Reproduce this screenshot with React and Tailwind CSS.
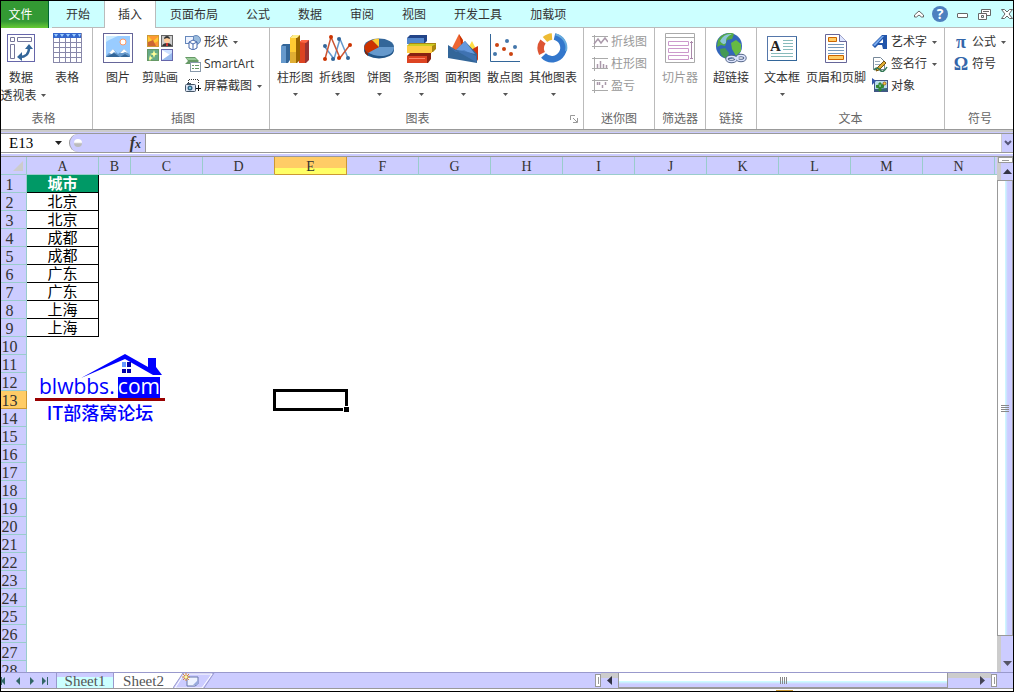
import { useState } from "react"

const columns = ["A", "B", "C", "D", "E", "F", "G", "H", "I", "J", "K", "L", "M", "N"]
const cities = ["城市", "北京", "北京", "成都", "成都", "广东", "广东", "上海", "上海"]
const rows = Array.from({ length: 28 }, (_, i) => i + 1)

const Caret = ({ className = "" }) => (
  <svg viewBox="0 0 5 3" className={`w-[5px] h-[3px] shrink-0 ${className}`}>
    <path d="M0 0h5L2.500 3z" fill="#555" />
  </svg>
)

const Big = ({ children }) => (
  <svg viewBox="0 0 32 32" className="w-8 h-8 shrink-0">
    {children}
  </svg>
)

const Small = ({ children }) => (
  <svg viewBox="0 0 16 16" className="w-4 h-4 shrink-0">
    {children}
  </svg>
)

const PivotIcon = () => (
  <Big>
    <rect x="2.500" y="2.500" width="27" height="27" fill="#fff" stroke="#6666aa" />
    <path d="M5.500 5.500h4v4h-4zM12.500 5.500h14v4h-14zM5.500 12.500h4v14h-4z" fill="#fff" stroke="#777799" />
    <path d="M15 25c5 0 9-3 9-9" fill="none" stroke="#336699" strokeWidth="2.500" />
    <path d="M20 17l4-5 4 5zM17 20v9l-5-4z" fill="#336699" />
  </Big>
)

const TableIcon = () => (
  <Big>
    <rect x="2" y="1" width="29" height="30" fill="#fff" />
    <rect x="2" y="1" width="29" height="5" fill="#3366cc" />
    <path d="M3 2h4l-2 3zM9 2h4l-2 3zM15 2h4l-2 3zM21 2h4l-2 3zM27 2h3l-1.500 3z" fill="#99ccff" />
    <path d="M2.500 6v25M8.500 6v25M14.500 6v25M19.500 6v25M25.500 6v25M30.500 1v30M2 10.500h28M2 15.500h28M2 20.500h28M2 25.500h28M2 30.500h29" stroke="#8888aa" />
  </Big>
)

const PictureIcon = () => (
  <Big>
    <rect x="1.500" y="1.500" width="29" height="29" fill="#fff" stroke="#666699" />
    <rect x="4" y="4" width="24" height="21" fill="#99ccff" />
    <path d="M4 4h12c-4 2-8 3-12 6z" fill="#ccecff" />
    <circle cx="21" cy="10" r="3" fill="#fff" stroke="#ff9966" />
    <path d="M4 24l7-7 5 5 6-5 6 6v2H4z" fill="#6699cc" />
    <path d="M7 21l4-4 3 4-2-1-2 2zM18 21l4-4 4 4-3-1-2 1z" fill="#fff" />
    <path d="M4 25l8-4 6 4 5-3 5 3z" fill="#336699" />
  </Big>
)

const ClipArtIcon = () => (
  <Big>
    <rect x="3.500" y="3.500" width="11" height="11" fill="#ff9933" stroke="#cc9933" />
    <path d="M4 4l5 5 5-4v4l-8 5H4z" fill="#ffcc33" />
    <path d="M4 10l5-2 3 6H4z" fill="#cc6633" />
    <rect x="17.500" y="3.500" width="11" height="11" fill="#ccc" stroke="#666666" />
    <circle cx="23" cy="8" r="3" fill="#ffcc99" />
    <path d="M20 7c0-4 6-4 6 0l-3-1zM18 14c1-4 9-4 10 0z" fill="#333" />
    <path d="M22 11h2v3h-2z" fill="#cc3333" />
    <rect x="3.500" y="17.500" width="11" height="11" fill="#66aa88" stroke="#669966" />
    <path d="M10 18l1 3 3 1-3 1-1 3-1-3-3-1 3-1zM6 23l1 2 2 1-2 1-1 2-1-2" fill="#ffff99" />
    <rect x="17.500" y="17.500" width="11" height="11" fill="#cce0ff" stroke="#6666aa" />
    <path d="M18 18l8 5-8 5z" fill="#fff" />
    <path d="M18 28l10-7v7z" fill="#99bbee" />
  </Big>
)

const ColumnIcon = () => (
  <Big>
    <path d="M2 14l2-2h7v16l-2 3H2z" fill="#336699" />
    <path d="M2 14h5v17H2z" fill="#6699cc" />
    <path d="M20 10l3-2h7v20l-3 3h-7z" fill="#993333" />
    <path d="M20 10h6v21h-6z" fill="#dd4422" />
    <path d="M20 10l3-2h7l-3 3z" fill="#ff6644" />
    <path d="M11 6l3-3h7v25l-3 3h-7z" fill="#996600" />
    <path d="M11 6h6v25h-6z" fill="#ffcc33" />
    <path d="M11 6l3-3h7l-3 3z" fill="#ffee88" />
    <path d="M11 20h6v11h-6z" fill="#cc9933" opacity=".6" />
  </Big>
)

const LineIcon = () => (
  <Big>
    <path d="M4 15L13 27L19 7L27 26" fill="none" stroke="#6699cc" strokeWidth="1.500" />
    <path d="M4 27L10 5L19 26L28 14" fill="none" stroke="#cc5533" strokeWidth="1.500" />
    <g fill="#336699"><circle cx="4" cy="14" r="2" /><circle cx="12" cy="27" r="2" /><circle cx="18" cy="7" r="2" /><circle cx="27" cy="26" r="2" /></g>
    <g fill="#cc3300"><circle cx="4" cy="27" r="2" /><circle cx="10" cy="5" r="2" /><circle cx="18" cy="26" r="2" /><circle cx="29" cy="13" r="2" /></g>
  </Big>
)

const PieIcon = () => (
  <Big>
    <ellipse cx="16" cy="18" rx="15" ry="8.500" fill="#225588" />
    <ellipse cx="16" cy="15" rx="15" ry="8.500" fill="#336699" />
    <path d="M16 15L31 15C31 26 12 26 5 20z" fill="#6699cc" />
    <path d="M16 15L5 21C0 18-1 12 9 8z" fill="#cc3300" />
    <path d="M2 18l3 4v2l-3-3z" fill="#882200" />
    <path d="M16 15L9 8q3-1.500 7-1.500z" fill="#ffcc33" />
  </Big>
)

const BarIcon = () => (
  <Big>
    <path d="M2 6l3-3h17v6l-3 3H2z" fill="#224488" />
    <path d="M2 6h17v6H2z" fill="#5588cc" />
    <path d="M2 14l3-3h26v6l-3 3H2z" fill="#aa8811" />
    <path d="M2 14h25v7H2z" fill="#ffcc44" />
    <path d="M2 14l3-2h26l-4 2z" fill="#cccc22" />
    <path d="M2 24l3-3h21v6l-3 4H2z" fill="#882211" />
    <path d="M2 24h20v7H2z" fill="#dd4422" />
    <path d="M4 26h16v1H4z" fill="#ff8866" />
  </Big>
)

const AreaIcon = () => (
  <Big>
    <path d="M4 18L12 2l9 17z" fill="#ee6633" />
    <path d="M12 2l4 6-1 8z" fill="#cc3300" />
    <path d="M20 18l5-9 4 8z" fill="#ffdd44" />
    <path d="M24 18l5-3 2-1v15z" fill="#cc3311" />
    <path d="M1 13l8 5 9-9 12 13v9L1 26z" fill="#336699" />
    <path d="M9 18l9-9 10 13-12-3z" fill="#6699dd" />
    <path d="M1 14l8 6 8-2 12 6v6z" fill="#4477bb" opacity=".7" />
  </Big>
)

const ScatterIcon = () => (
  <Big>
    <path d="M1.500 2v27.500H31" fill="none" stroke="#336699" />
    <g fill="#cc4411"><circle cx="8" cy="13" r="2" /><circle cx="15" cy="17" r="2" /><circle cx="22" cy="22" r="2" /></g>
    <g fill="#4477aa"><circle cx="6" cy="22" r="2" /><circle cx="18" cy="9" r="2" /><circle cx="26" cy="15" r="2" /></g>
  </Big>
)

// three ring segments with gaps at 12, 8 and 11 o'clock
const DonutIcon = () => (
  <Big>
    <path d="M17.500 4.500A11.500 11.500 0 1 1 6.500 23.500" fill="none" stroke="#3377cc" strokeWidth="6.500" />
    <path d="M18.500 2.500A13.500 13.500 0 0 1 29 19" fill="none" stroke="#66aadd" strokeWidth="2" />
    <path d="M5 21.500A11.500 11.500 0 0 1 6 9.500" fill="none" stroke="#dd5533" strokeWidth="6.500" />
    <path d="M8 7.500A11.500 11.500 0 0 1 15 4.500" fill="none" stroke="#eebb33" strokeWidth="6.500" />
  </Big>
)

const SlicerIcon = () => (
  <Big>
    <path d="M1.500 1.500h29v29h-29zM1 5.500h30" fill="none" stroke="#aaa" />
    <path d="M4.500 9.500h20v4h-20zM4.500 16.500h20v4h-20zM4.500 23.500h20v4h-20z" fill="#fff" stroke="#cc99cc" />
    <path d="M27.500 9v18M26 10.500h3M26 26.500h3" stroke="#aa88aa" />
  </Big>
)

const LinkIcon = () => (
  <Big>
    <circle cx="14" cy="14" r="13" fill="#3366bb" />
    <path d="M3 8C7 1 16 0 19 2l-2 5-5 1-2 6-4-1-4 2z" fill="#55aa44" />
    <path d="M16 11l5-3 5 4v7l-5 5-4-7z" fill="#66bb44" />
    <path d="M5 17l5-1 4 5-2 6C7 25 5 22 5 17z" fill="#449955" />
    <path d="M5 9q4-8 12-7-7 3-6 9-3 3-6-2z" fill="#99ccff" opacity=".8" />
    <g fill="none" strokeWidth="3.500" stroke="#556688"><ellipse cx="16.500" cy="27" rx="4.500" ry="2.500" /><ellipse cx="26" cy="26" rx="4" ry="2.500" /></g>
    <g fill="none" strokeWidth="1.500" stroke="#dde5ff"><ellipse cx="16.500" cy="27" rx="4.500" ry="2.500" /><ellipse cx="26" cy="26" rx="4" ry="2.500" /><path d="M19 26h5" /></g>
  </Big>
)

const TextBoxIcon = () => (
  <Big>
    <rect x="1.500" y="4.500" width="29" height="24" fill="#fff" stroke="#5577aa" />
    <path d="M30.500 5v24M2 28.500h29" stroke="#336699" />
    <path d="M17 8.500h10M17 11.500h10M17 14.500h10M17 17.500h10M5 21.500h22M5 24.500h22" stroke="#88bbbb" />
    <text x="4" y="19" fontSize="15" fontWeight="bold" fontFamily="Liberation Serif" fill="#222">A</text>
  </Big>
)

const HeaderFooterIcon = () => (
  <Big>
    <path d="M5.500 2.500h14l7 7v21h-21z" fill="#fff" stroke="#666699" />
    <path d="M19.500 2.500v7h7" fill="#dde5ff" stroke="#666699" />
    <path d="M8.500 5.500h8v4h-8zM8.500 23.500h15v4h-15z" fill="#ffcc66" stroke="#cc6600" />
    <path d="M8 12.500h16M8 15.500h16M8 18.500h16M8 21.500h16" stroke="#7799bb" />
  </Big>
)

const ShapesIcon = () => (
  <Small>
    <circle cx="11" cy="6" r="4.500" fill="#99bbdd" stroke="#6688bb" />
    <rect x=".5" y="2.500" width="8" height="7" fill="#eef3ff" stroke="#6688bb" />
    <path d="M4 8l4-2 4 2v6l-4 2-4-2z" fill="#fff" stroke="#4466aa" />
    <path d="M4 8l4 2 4-2M8 10v6" fill="none" stroke="#4466aa" />
  </Small>
)

const SmartArtIcon = () => (
  <Small>
    <path d="M0 1h10l4 4-3 3H0l3-3z" fill="#669966" />
    <path d="M1 2h9l2 2H3z" fill="#99cc99" />
    <rect x="5.500" y="6.500" width="10" height="9" fill="#fff" stroke="#8899aa" />
    <path d="M7 9.500h2M10 9.500h4M7 12.500h2M10 12.500h4" stroke="#669966" />
  </Small>
)

const ScreenshotIcon = () => (
  <Small>
    <path d="M4 1.500h10M3.500 2v4M13.500 2v4" stroke="#333" strokeDasharray="1 1" />
    <rect x=".5" y="6.500" width="10" height="7" rx="1" fill="#dde5f5" stroke="#445566" />
    <rect x="2" y="5" width="4" height="2" fill="#445566" />
    <circle cx="5" cy="10" r="2.500" fill="#336688" />
    <circle cx="5" cy="10" r="1" fill="#99eeff" />
    <path d="M13.500 7v6M11 10.500h5" stroke="#111" />
  </Small>
)

const sparkPaths = {
  line: "M2 10l4-5 3 4 4-5 3 4",
  column: "M5.500 12V8M8.500 12V5M11.500 12V8M14.500 12V9",
  winloss: "M5.500 4v3M7.500 4v3M10.500 7v3M13.500 4v3",
}

const SparkIcon = ({ kind }) => (
  <Small>
    <path d="M2.500 1v14M0 2.500h16M0 12.500h16" stroke="#aaa" fill="none" />
    <path d={sparkPaths[kind]} stroke="#aa99aa" fill="none" strokeWidth="1.500" />
  </Small>
)

const WordArtIcon = () => (
  <Small>
    <path d="M0 11L10 1h5v14h-4l-1-4H6l-3 3z" fill="#2255aa" />
    <path d="M7 9l4-4v4z" fill="#fff" />
    <path d="M1 11l9-9h2L3 12z" fill="#77aaee" />
  </Small>
)

const SignatureIcon = () => (
  <Small>
    <path d="M1.500 1.500h7l4 4v8h-11z" fill="#fff" stroke="#778899" />
    <path d="M3 5.500h5M3 8.500h7" stroke="#99aabb" />
    <path d="M5 12l7-7 2 2-7 7-3 1z" fill="#ddaa33" stroke="#775511" />
    <path d="M2 14q3-4 6 0t7-3" fill="none" stroke="#337755" strokeWidth="1.500" />
  </Small>
)

const ObjectIcon = () => (
  <Small>
    <rect x="2.500" y="2.500" width="13" height="11" fill="#bbddee" stroke="#445588" />
    <path d="M3 13v-2l12-1v3z" fill="#336677" />
    <path d="M7 13V5h2v8zM4.500 7v2.500h7V6" fill="#338833" stroke="#338833" />
    <circle cx="12.500" cy="5.500" r="1.500" fill="#ffcc33" stroke="#996633" />
    <path d="M0 0l4 3-4 4z" fill="#3355aa" />
  </Small>
)

const Glyph = ({ children }) => (
  <span aria-hidden="true" className="w-4 text-center font-['Liberation_Serif',serif] font-bold text-lg leading-4 text-[#3366aa]">
    {children}
  </span>
)

function LargeButton({ icon, label, width, menu, disabled }) {
  return (
    <button disabled={disabled} className={`flex flex-col items-center shrink-0 whitespace-nowrap ${width}`}>
      {icon}
      <span className={`mt-[5px] leading-[18px] ${disabled ? "text-[#999]" : "text-[#333]"}`}>{label}</span>
      {menu && <Caret className="mt-[6px]" />}
    </button>
  )
}

function SmallButton({ icon, label, menu, disabled }) {
  return (
    <button disabled={disabled} className="flex items-center h-[22px] whitespace-nowrap">
      {icon}
      <span className={`ml-[3px] ${disabled ? "text-[#999]" : "text-[#333]"}`}>{label}</span>
      {menu && <Caret className="ml-[5px]" />}
    </button>
  )
}

function Group({ title, className = "", titleClass = "", launcher, children }) {
  return (
    <section className={`flex flex-col shrink-0 pt-1 border-r border-[#bbb] ${className}`}>
      <div className="flex-1 flex items-start">{children}</div>
      <div className="flex items-center h-5 text-[#666]">
        <h2 className={`flex-1 text-center ${titleClass}`}>{title}</h2>
        {launcher && (
          <button aria-label={`${title}选项`} className="w-[18px] flex justify-center">
            <svg viewBox="0 0 8 8" className="w-2 h-2">
              <path d="M.5 5V.5H5M3 3l4 4M7.500 3v4.500H3" fill="none" stroke="#999" />
            </svg>
          </button>
        )}
      </div>
    </section>
  )
}

function Tabs() {
  const [active, setActive] = useState("插入")
  const tabs = ["开始", "插入", "页面布局", "公式", "数据", "审阅", "视图", "开发工具", "加载项"]
  return (
    <header className="flex h-[27px] bg-[#ccffff] text-[#333] shrink-0">
      <button className="w-12 mr-[3px] pr-2 text-white bg-linear-to-b from-[#339933] from-75% to-[#66cc33] border-r border-[#006633]">
        文件
      </button>
      <nav className="flex flex-1 border-b border-[#bbb]">
        {tabs.map((tab) => (
          <button
            key={tab}
            onClick={() => setActive(tab)}
            className={`whitespace-nowrap ${
              tab === active ? "bg-white border-x border-[#bbb] px-[13px] -mb-px" : "px-[14px] pt-px"
            }`}
          >
            {tab}
          </button>
        ))}
      </nav>
      <div className="flex items-center border-b border-[#bbb]">
        <button aria-label="折叠功能区" className="mr-2">
          <svg viewBox="0 0 10 8" className="w-[10px] h-2">
            <path d="M.5 5L5 1l4.500 4v2h-2L5 5 2.500 7h-2z" fill="#fff" stroke="#666" />
          </svg>
        </button>
        <button aria-label="帮助" className="w-4 h-4 mr-[9px] rounded-full bg-[#4d80bf] text-white font-bold text-sm leading-4">
          ?
        </button>
        <button aria-label="最小化" className="w-[11px] h-[5px] mr-[10px] mt-[2px] rounded-[1px] border border-[#666] bg-white" />
        <button aria-label="还原" className="mr-[10px]">
          <svg viewBox="0 0 13 11" className="w-[13px] h-[11px]">
            <path d="M3.500 .5h9v6h-9zM5 2.500h6" fill="#fff" stroke="#666" />
            <path d="M.5 4.500h8v6h-8z" fill="#fff" stroke="#666" />
            <path d="M3.500 6.500h2v2h-2z" fill="#ccffff" stroke="#666" />
          </svg>
        </button>
        <button aria-label="关闭">
          <svg viewBox="0 0 12 10" className="w-3 h-[10px]">
            <path d="M.5 .5h3L6 3 8.500 .5h3L8 5l3.500 4.500h-3L6 7 3.500 9.500h-3L4 5z" fill="#fff" stroke="#666" />
          </svg>
        </button>
      </div>
    </header>
  )
}

function Ribbon() {
  return (
    <div className="flex h-[101px] bg-white shrink-0 overflow-hidden">
      <Group title="表格" className="w-[92px]" titleClass="pr-[6px]">
        <button className="w-11 flex flex-col items-center whitespace-nowrap">
          <span className="mr-1 flex flex-col items-center">
            <PivotIcon />
            <span className="mt-[5px] leading-[18px] text-[#333]">数据</span>
          </span>
          <span className="flex items-center leading-[17px] text-[#333]">
            透视表
            <Caret className="ml-1" />
          </span>
        </button>
        <LargeButton icon={<TableIcon />} label="表格" width="w-[44px]" />
      </Group>
      <Group title="插图" className="w-[177px] pl-1">
        <LargeButton icon={<PictureIcon />} label="图片" width="w-[42px]" />
        <LargeButton icon={<ClipArtIcon />} label="剪贴画" width="w-[42px]" />
        <div className="flex flex-col items-start ml-1 -mt-px">
          <SmallButton icon={<ShapesIcon />} label="形状" menu />
          <SmallButton icon={<SmartArtIcon />} label="SmartArt" />
          <SmallButton icon={<ScreenshotIcon />} label="屏幕截图" menu />
        </div>
      </Group>
      <Group title="图表" className="w-[314px] pl-1" titleClass="pr-1" launcher>
        <LargeButton icon={<ColumnIcon />} label="柱形图" width="w-[42px]" menu />
        <LargeButton icon={<LineIcon />} label="折线图" width="w-[42px]" menu />
        <LargeButton icon={<PieIcon />} label="饼图" width="w-[42px]" menu />
        <LargeButton icon={<BarIcon />} label="条形图" width="w-[42px]" menu />
        <LargeButton icon={<AreaIcon />} label="面积图" width="w-[42px]" menu />
        <LargeButton icon={<ScatterIcon />} label="散点图" width="w-[42px]" menu />
        <LargeButton icon={<DonutIcon />} label="其他图表" width="w-[54px]" menu />
      </Group>
      <Group title="迷你图" className="w-[71px]">
        <div className="flex flex-col items-start ml-2 -mt-px">
          <SmallButton icon={<SparkIcon kind="line" />} label="折线图" disabled />
          <SmallButton icon={<SparkIcon kind="column" />} label="柱形图" disabled />
          <SmallButton icon={<SparkIcon kind="winloss" />} label="盈亏" disabled />
        </div>
      </Group>
      <Group title="筛选器" className="w-[51px]">
        <LargeButton icon={<SlicerIcon />} label="切片器" width="w-[50px]" disabled />
      </Group>
      <Group title="链接" className="w-[51px]">
        <LargeButton icon={<LinkIcon />} label="超链接" width="w-[50px]" />
      </Group>
      <Group title="文本" className="w-[188px] pl-1" titleClass="pr-1">
        <LargeButton icon={<TextBoxIcon />} label="文本框" width="w-[42px]" menu />
        <LargeButton icon={<HeaderFooterIcon />} label="页眉和页脚" width="w-[66px]" />
        <div className="flex flex-col items-start ml-[3px] -mt-px">
          <SmallButton icon={<WordArtIcon />} label="艺术字" menu />
          <SmallButton icon={<SignatureIcon />} label="签名行" menu />
          <SmallButton icon={<ObjectIcon />} label="对象" />
        </div>
      </Group>
      <Group title="符号" className="flex-1 border-r-0" titleClass="pl-[2px]">
        <div className="flex flex-col items-start ml-2 -mt-px">
          <SmallButton icon={<Glyph>π</Glyph>} label="公式" menu />
          <SmallButton icon={<Glyph>Ω</Glyph>} label="符号" />
        </div>
      </Group>
    </div>
  )
}

function FormulaBar() {
  return (
    <div className="shrink-0 bg-[#ccccff] border-t border-[#999]">
      <div className="h-[2px] bg-[#ccc]" />
      <div className="flex h-5 mt-px border-y border-[#999] bg-white">
        <input
          aria-label="名称框"
          defaultValue="E13"
          className="w-[54px] pl-2 pt-px text-black font-['Liberation_Serif',serif] text-[15px] leading-[17px] outline-none"
        />
        <button aria-label="名称列表" className="w-[14px] flex items-center">
          <svg viewBox="0 0 7 4" className="w-[7px] h-1">
            <path d="M0 0h7L3.500 4z" fill="#222" />
          </svg>
        </button>
        <div className="w-[76px] flex items-center justify-between pl-1 pr-1 bg-[#ccccff] rounded-l-full border-l border-[#999]">
          <span className="w-2 h-2 rounded-full bg-linear-to-b from-white from-40% to-[#bbb] to-60%" />
          <button aria-label="插入函数" className="font-['Liberation_Serif',serif] italic font-bold text-base leading-4 text-[#333]">
            f<span className="text-xs">x</span>
          </button>
        </div>
        <input aria-label="编辑栏" className="flex-1 min-w-0 border-l border-[#999] outline-none" />
        <button aria-label="展开编辑栏" className="w-[12px] flex items-center justify-center bg-[#ccccff] border-l border-[#ccc]">
          <svg viewBox="0 0 8 6" className="w-2 h-[6px]">
            <path d="M1 1l3 3 3-3" fill="none" stroke="#555577" strokeWidth="2" />
          </svg>
        </button>
      </div>
      <div className="h-px bg-white" />
      <div className="h-[3px] border-b border-[#999]" />
    </div>
  )
}

const headerClass = (col) => {
  if (col === "E") return "bg-linear-to-b from-[#ffcc66] from-65% to-[#ffff66] to-65% border-[#cc9933]"
  if (col === "D") return "bg-[#ccccff] border-b-[#99cccc] border-r-[#cc9933]"
  return "bg-[#ccccff] border-[#99cccc]"
}

const cityClass = (row) => {
  if (row === 1) return "bg-[#009966] text-white font-bold border-b border-r border-black"
  if (row <= cities.length) return "text-black border-b border-r border-black"
  return ""
}

function Sheet() {
  return (
    <table className="w-full table-fixed border-separate border-spacing-0 font-['Liberation_Serif','Noto_Sans_CJK_SC',serif] text-base leading-[17px] text-[#333]">
      <colgroup>
        <col className="w-[26px]" />
        {columns.map((col) => (
          <col key={col} className={col === "B" ? "w-8" : "w-[72px]"} />
        ))}
        <col />
      </colgroup>
      <thead>
        <tr>
          <th className="h-[18px] p-0 bg-[#ccccff] border-b border-r border-[#99cccc]">
            <svg viewBox="0 0 10 10" className="w-[10px] h-[10px] ml-3">
              <path d="M10 0v10H0z" fill="#ccc" />
            </svg>
          </th>
          {columns.map((col) => (
            <th key={col} scope="col" className={`h-[18px] p-0 pt-[2px] text-sm leading-[15px] font-normal border-b border-r ${headerClass(col)}`}>
              {col}
            </th>
          ))}
          <th className="p-0 bg-[#ccccff] border-b border-[#99cccc]" />
        </tr>
      </thead>
      <tbody>
        {rows.map((row) => (
          <tr key={row}>
            <th
              scope="row"
              className={`h-[18px] p-0 pt-[2px] pr-2 leading-[15px] font-normal text-center border-b border-r ${
                row === 13 ? "bg-[#ffcc66] border-[#cc9933]" : "bg-[#ccccff] border-[#99cccc]"
              }`}
            >
              {row}
            </th>
            {columns.map((col) => (
              <td key={col} className={`relative p-0 ${col === "A" ? `pt-[2px] leading-[15px] text-center text-[15px] ${cityClass(row)}` : ""}`}>
                {col === "A" && cities[row - 1]}
                {col === "E" && row === 13 && (
                  <div className="absolute -left-[2px] -right-px -inset-y-[2px] border-3 border-black">
                    <i className="absolute -right-1 -bottom-1 w-[6px] h-[6px] bg-black border-t border-l border-white" />
                  </div>
                )}
              </td>
            ))}
            <td />
          </tr>
        ))}
      </tbody>
    </table>
  )
}

// picture floating over the cells
function Logo() {
  return (
    <div className="absolute left-[34px] top-[196px] w-[130px] text-[#0000ff] font-['Open_Sans','Noto_Sans_CJK_SC',sans-serif]">
      <svg viewBox="0 0 130 26" className="w-full h-[26px]">
        <path d="M46 25L90 1l23 13V5h8v9l6 8h-9L90 6z" fill="#0000ff" />
        <path d="M87 9h4v5h-4z" fill="#6699ff" />
        <path d="M92 9h4v5h-4zM87 16h4v4h-4zM92 16h4v4h-4z" fill="#0000aa" />
      </svg>
      <div className="flex -mt-[2px] pl-1 pr-[5px] text-[21px] leading-[18px] font-medium">
        <span className="flex-1">blwbbs.</span>
        <span className="h-[21px] bg-[#0000ff] text-white">com</span>
      </div>
      <div className="h-[3px] bg-[#990000]" />
      <div className="mt-px text-center text-lg leading-5 font-['Noto_Sans_CJK_SC',sans-serif] font-medium">IT部落窝论坛</div>
    </div>
  )
}

function VerticalScroll() {
  return (
    <div className="w-4 flex flex-col bg-[#ccccff] border-l-4 border-[#ccc]">
      <div className="h-[6px] -ml-[3px] border border-[#999] bg-white flex items-center justify-center">
        <span className="w-[7px] h-px bg-[#999]" />
      </div>
      <button aria-label="向上滚动" className="h-[17px] flex items-center justify-center">
        <svg viewBox="0 0 9 5" className="w-[9px] h-[5px]">
          <path d="M0 5h9L4.500 0z" fill="#333344" />
        </svg>
      </button>
      <div className="flex-1 -ml-1 flex flex-col gap-px items-end justify-center pr-[3px] border border-[#999] bg-linear-to-r from-white from-50% via-[#ccffff] via-50% to-[#ccccff] to-70%">
        <i className="w-2 h-px bg-[#888]" />
        <i className="w-2 h-px bg-[#888]" />
        <i className="w-2 h-px bg-[#888]" />
        <i className="w-2 h-px bg-[#888]" />
      </div>
      <button aria-label="向下滚动" className="h-9 pb-[6px] flex items-end justify-center">
        <svg viewBox="0 0 9 5" className="w-[9px] h-[5px]">
          <path d="M0 0h9L4.500 5z" fill="#555566" />
        </svg>
      </button>
    </div>
  )
}

const Splitter = () => (
  <span className="w-[6px] my-px flex items-center justify-center bg-white border border-[#999]">
    <i className="w-px h-[7px] bg-[#999]" />
  </span>
)

function BottomBar() {
  const arrows = [
    ["首张", "M4 0v8L0 4zM0 0h1v8H0z"],
    ["上一张", "M5 0v8L1 4z"],
    ["下一张", "M1 0v8l4-4z"],
    ["末张", "M0 0v8l4-4zM5 0h1v8H5z"],
  ]
  return (
    <footer className="flex h-[17px] shrink-0 bg-[#ccccff] border-t border-b border-t-[#9999cc] border-b-[#999] text-[#555]">
      <div className="flex w-[55px]">
        {arrows.map(([label, d]) => (
          <button key={label} aria-label={label} className="w-[14px] flex items-center">
            <svg viewBox="0 0 6 8" className="w-[6px] h-2">
              <path d={d} fill="#336666" />
            </svg>
          </button>
        ))}
      </div>
      <button className="w-[58px] pt-px border-x border-[#9999cc] bg-linear-to-b from-[#ccccff] from-25% to-[#ccffff] to-25% font-['Liberation_Serif',serif] text-[15px] leading-[14px]">
        Sheet1
      </button>
      <button className="w-[59px] pt-px bg-white font-['Liberation_Serif',serif] text-[15px] leading-[14px]">Sheet2</button>
      <button aria-label="插入工作表">
        <svg viewBox="0 0 42 15" className="w-[42px] h-[15px]">
          <path d="M0 0h10L0 15z" fill="#fff" />
          <path d="M0 15L10 0h31L31 15" fill="none" stroke="#9999cc" />
          <path d="M11 1h28L29 15H2z" fill="none" stroke="#fff" />
          <path d="M14 4h11v7l-3 2h-8z" fill="#eef3ff" stroke="#6677aa" />
          <path d="M20 12l5-5v5z" fill="#99aadd" />
          <path d="M13 0v8M9 4h8M10 1l6 6M16 1l-6 6" stroke="#dd8833" />
          <circle cx="13" cy="4" r="1.500" fill="#ffff99" />
        </svg>
      </button>
      <span className="flex-1" />
      <Splitter />
      <div className="w-[390px] flex bg-linear-to-b from-[#ccc] from-30% to-[#ccccff] to-30%">
        <button aria-label="向左滚动" className="w-[17px] flex items-center justify-center">
          <svg viewBox="0 0 5 9" className="w-[5px] h-[9px]">
            <path d="M5 0v9L0 4.500z" fill="#333344" />
          </svg>
        </button>
        <div className="w-[330px] flex items-center justify-center gap-px border-x border-b border-[#999] bg-linear-to-b from-white from-60% via-[#ccffff] via-60% to-[#ccccff] to-80%">
          <i className="w-px h-[7px] bg-[#888]" />
          <i className="w-px h-[7px] bg-[#888]" />
          <i className="w-px h-[7px] bg-[#888]" />
          <i className="w-px h-[7px] bg-[#888]" />
        </div>
        <button aria-label="向右滚动" className="flex-1 pr-[6px] flex items-center justify-end">
          <svg viewBox="0 0 5 9" className="w-[5px] h-[9px]">
            <path d="M0 0v9l5-4.500z" fill="#444455" />
          </svg>
        </button>
      </div>
      <Splitter />
      <span className="w-4" />
    </footer>
  )
}

const App = () => (
  <div className="h-screen flex flex-col overflow-hidden bg-white border border-black text-xs font-['Open_Sans','Noto_Sans_CJK_SC',sans-serif]">
    <Tabs />
    <Ribbon />
    <FormulaBar />
    <main className="flex flex-1 min-h-0">
      <div className="relative flex-1 min-w-0 overflow-hidden">
        <Sheet />
        <Logo />
      </div>
      <VerticalScroll />
    </main>
    <BottomBar />
    <div className="flex h-[2px] shrink-0 items-end">
      <span className="w-[17px] h-px ml-auto mr-[220px] bg-[#cc9933]" />
    </div>
  </div>
)

export default App
